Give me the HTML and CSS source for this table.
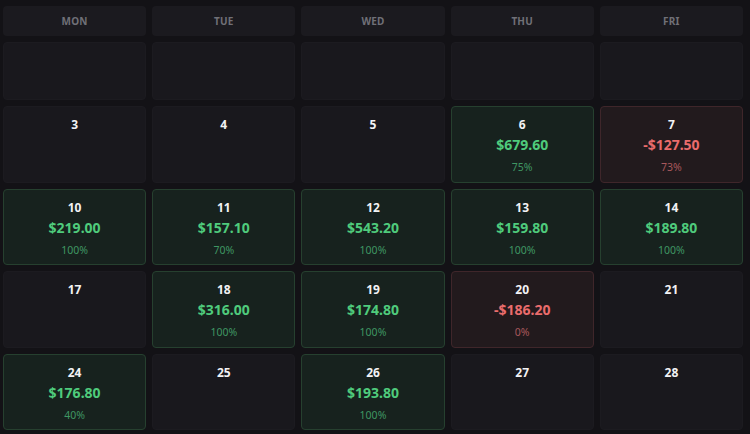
FILE: index.html
```html
<!DOCTYPE html>
<html>
<head>
<meta charset="utf-8">
<link rel="stylesheet" href="styles.css">
</head>
<body>
<div class="cal">
  <div class="head">MON</div>
  <div class="head">TUE</div>
  <div class="head">WED</div>
  <div class="head">THU</div>
  <div class="head">FRI</div>

  <div class="cell blank"></div>
  <div class="cell blank"></div>
  <div class="cell blank"></div>
  <div class="cell blank"></div>
  <div class="cell blank"></div>

  <div class="cell"><span class="day">3</span></div>
  <div class="cell"><span class="day">4</span></div>
  <div class="cell"><span class="day">5</span></div>
  <div class="cell win"><span class="day">6</span><span class="amt">$679.60</span><span class="pct">75%</span></div>
  <div class="cell loss"><span class="day">7</span><span class="amt">-$127.50</span><span class="pct">73%</span></div>

  <div class="cell win"><span class="day">10</span><span class="amt">$219.00</span><span class="pct">100%</span></div>
  <div class="cell win"><span class="day">11</span><span class="amt">$157.10</span><span class="pct">70%</span></div>
  <div class="cell win"><span class="day">12</span><span class="amt">$543.20</span><span class="pct">100%</span></div>
  <div class="cell win"><span class="day">13</span><span class="amt">$159.80</span><span class="pct">100%</span></div>
  <div class="cell win"><span class="day">14</span><span class="amt">$189.80</span><span class="pct">100%</span></div>

  <div class="cell"><span class="day">17</span></div>
  <div class="cell win"><span class="day">18</span><span class="amt">$316.00</span><span class="pct">100%</span></div>
  <div class="cell win"><span class="day">19</span><span class="amt">$174.80</span><span class="pct">100%</span></div>
  <div class="cell loss"><span class="day">20</span><span class="amt">-$186.20</span><span class="pct">0%</span></div>
  <div class="cell"><span class="day">21</span></div>

  <div class="cell win"><span class="day">24</span><span class="amt">$176.80</span><span class="pct">40%</span></div>
  <div class="cell"><span class="day">25</span></div>
  <div class="cell win"><span class="day">26</span><span class="amt">$193.80</span><span class="pct">100%</span></div>
  <div class="cell"><span class="day">27</span></div>
  <div class="cell"><span class="day">28</span></div>
</div>
</body>
</html>
```

FILE: styles.css
```css
html, body {
  margin: 0;
  padding: 0;
  background: #131216;
  font-family: "Noto Sans", "Open Sans", sans-serif;
  overflow: hidden;
}

.cal {
  display: grid;
  grid-template-columns: repeat(5, 1fr);
  grid-template-rows: 30px 58px repeat(4, 76.5px);
  gap: 6px;
  padding: 6px 7px 0 3px;
  width: 750px;
  box-sizing: border-box;
}

.head {
  background: #1b1a1f;
  border-radius: 4px;
  color: #707077;
  font-size: 10px;
  font-weight: 700;
  letter-spacing: 0.2px;
  display: flex;
  align-items: center;
  justify-content: center;
}

.cell {
  background: #19181d;
  border: 1px solid #1c1b20;
  border-radius: 4px;
  box-sizing: border-box;
  display: flex;
  flex-direction: column;
  align-items: center;
  padding-top: 9px;
}

.day {
  color: #f2f2f4;
  font-size: 12px;
  font-weight: 700;
  line-height: 17px;
}

.amt {
  font-size: 14px;
  font-weight: 700;
  line-height: 20px;
  margin-top: 2px;
}

.pct {
  font-size: 10.5px;
  line-height: 14px;
  margin-top: 5px;
}

.win {
  background: #17221e;
  border-color: #26402f;
}
.win .amt { color: #4fcb7c; }
.win .pct { color: #3f9663; }

.loss {
  background: #221a1d;
  border-color: #3f262a;
}
.loss .amt { color: #ea6c6c; }
.loss .pct { color: #a8585c; }
```
